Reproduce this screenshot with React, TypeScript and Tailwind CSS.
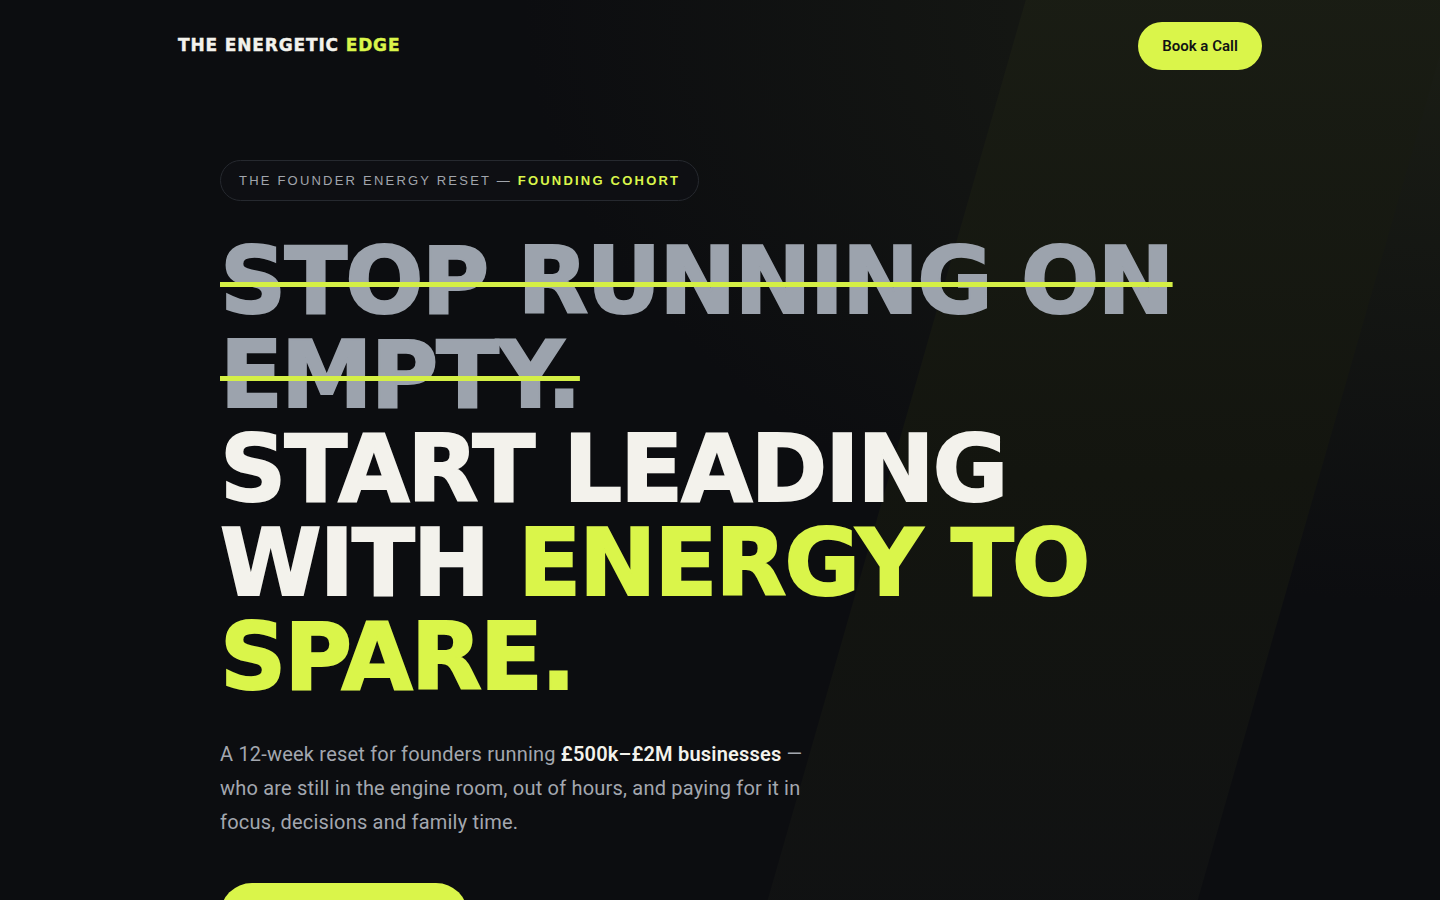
import React from "react";

const headingFont = { fontFamily: '"DejaVu Sans", "Liberation Sans", sans-serif' };

// NAV

function Header() {
  return (
    <header className="relative z-10 mx-auto flex w-[1084px] items-center justify-between pt-[22px]">
      <a
        href="#"
        className="text-[17px] font-bold uppercase tracking-[0.05em] text-[#f3f2ec] [-webkit-text-stroke:0.4px_currentColor]"
        style={headingFont}
      >
        The Energetic <span className="text-[#daf54a]">Edge</span>
      </a>

      <a
        href="#"
        className="flex h-12 w-[124px] items-center justify-center rounded-full bg-[#daf54a] font-['Roboto',sans-serif] text-[15px] font-semibold text-[#111214]"
      >
        Book a Call
      </a>
    </header>
  );
}

// HERO

function Hero() {
  return (
    <section className="relative z-10 mx-auto w-[1000px] pt-[90px]">
      {/* BADGE */}
      <div className="inline-flex h-[41px] items-center rounded-full border border-[#26292f] bg-[#0e0f13] px-[18px] font-['Liberation_Sans',sans-serif] text-[13px] uppercase tracking-[0.17em] text-[#a1a5ac]">
        The Founder Energy Reset —&nbsp;
        <span className="font-bold text-[#daf54a]">Founding Cohort</span>
      </div>

      {/* HEADING */}
      <h1
        className="mt-[34px] max-w-[1000px] text-[92px] font-bold uppercase leading-[94px] tracking-[-0.02em] [-webkit-text-stroke:2px_currentColor]"
        style={headingFont}
      >
        <span className="block text-[#9ca3ad] line-through decoration-[#d4ef45] decoration-[5px]">
          Stop running on empty.
        </span>
        <span className="block text-[#f3f2ec]">
          Start leading with <span className="text-[#daf54a]">energy to spare.</span>
        </span>
      </h1>

      {/* COPY */}
      <p className="mt-[32px] max-w-[610px] font-['Roboto',sans-serif] text-[20px] leading-[34px] tracking-[0.01em] text-[#a3a7af]">
        A 12-week reset for founders running{" "}
        <strong className="font-semibold text-[#f3f2ec]">£500k–£2M businesses</strong> —
        who are still in the engine room, out of hours, and paying for it in focus,
        decisions and family time.
      </p>

      {/* CTA */}
      <a
        href="#"
        className="mt-[44px] flex h-16 w-[248px] items-center justify-center rounded-full bg-[#daf54a] font-['Roboto',sans-serif] text-[16px] font-semibold text-[#111214]"
      >
        Book your reset call
      </a>
    </section>
  );
}

export default function App() {
  return (
    <div className="relative min-h-screen overflow-hidden bg-[#0c0d10]">
      {/* BACKGROUND BEAM */}
      <div className="pointer-events-none absolute inset-0 bg-[radial-gradient(ellipse_at_top_right,#1b1e15_0%,transparent_45%)]" />
      <div className="pointer-events-none absolute -top-[40px] bottom-[-40px] left-[890px] w-[430px] -skew-x-[16deg] bg-gradient-to-b from-[#1a1d14] via-[#13150f] to-[#101113]" />

      <Header />
      <Hero />
    </div>
  );
}
